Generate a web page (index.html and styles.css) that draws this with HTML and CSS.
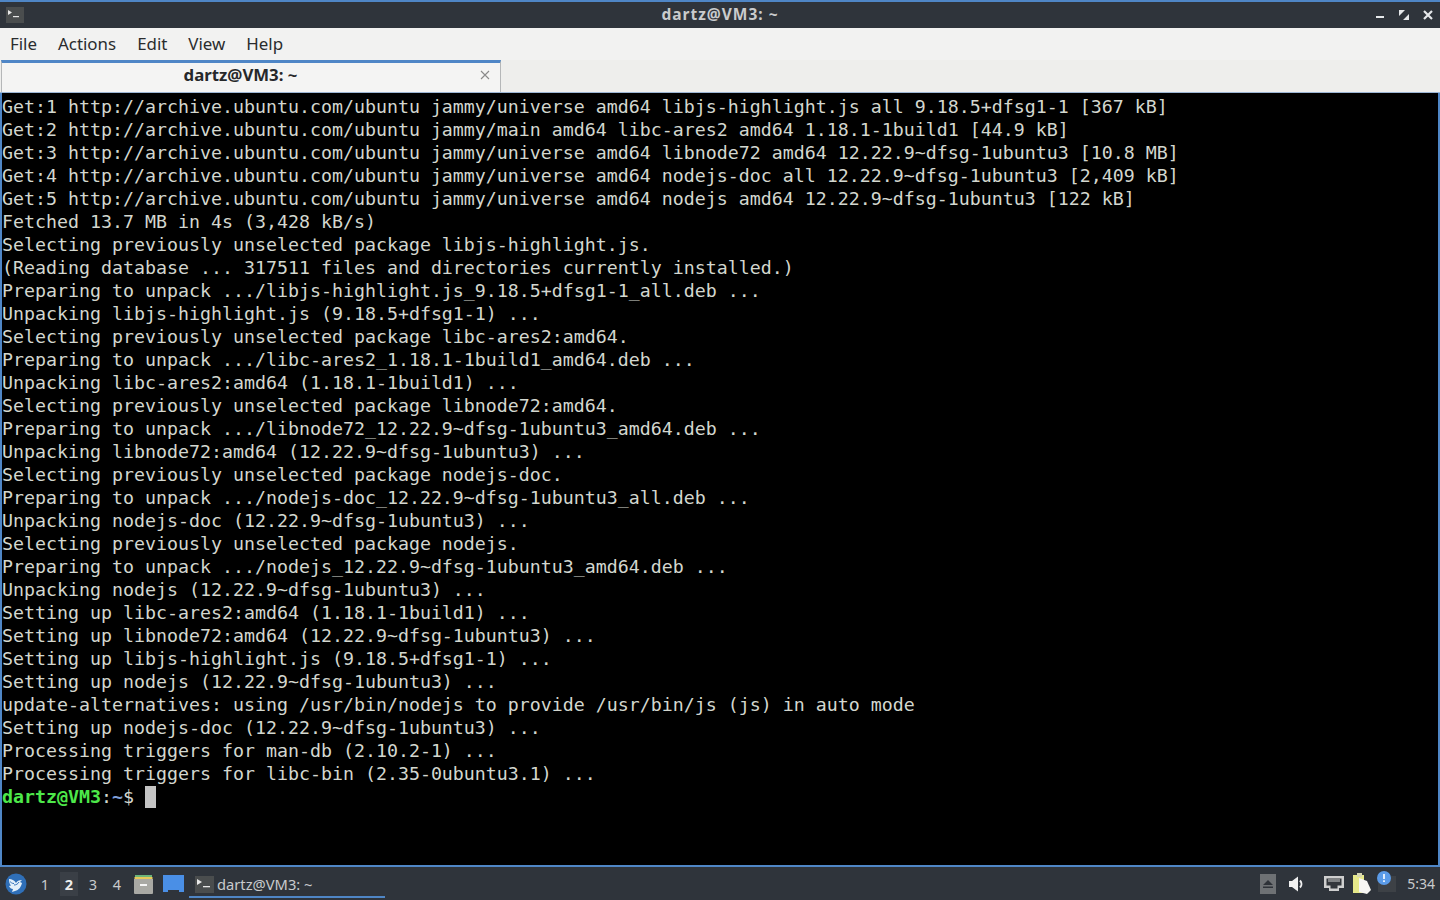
FILE: index.html
```html
<!DOCTYPE html>
<html lang="en">
<head>
<meta charset="utf-8">
<title>dartz@VM3: ~</title>
<link rel="stylesheet" href="styles.css">
</head>
<body>
<div class="window">
  <header class="titlebar">
    <span class="win-icon"><svg width="18" height="16" viewBox="0 0 18 16"><rect width="18" height="16" fill="#4a4d4e"/><path d="M2 3l4 2.500-4 2.500" fill="#e8e8e8"/><path d="M7 9h6v1.200H7z" fill="#e8e8e8"/></svg></span>
    <span class="win-title">dartz@VM3: ~</span>
    <span class="win-controls">
      <svg width="10" height="10" viewBox="0 0 10 10"><path d="M1 6h8v2H1z" fill="#e6e8ea"/></svg>
      <svg width="12" height="12" viewBox="0 0 12 12"><path d="M1 1h6L1 7zM11 11H5l6-6z" fill="#e6e8ea"/></svg>
      <svg width="10" height="10" viewBox="0 0 10 10"><path d="M1 1l8 8M9 1l-8 8" stroke="#e6e8ea" stroke-width="2.200" fill="none"/></svg>
    </span>
  </header>
  <nav class="menubar">
    <span>File</span><span>Actions</span><span>Edit</span><span>View</span><span>Help</span>
  </nav>
  <div class="tabbar">
    <div class="tab">
      <span class="tab-title">dartz@VM3: ~</span>
      <svg class="tab-close" width="10" height="10" viewBox="0 0 10 10"><path d="M1 1l8 8M9 1l-8 8" stroke="#8a8a8a" stroke-width="1.100" fill="none"/></svg>
    </div>
  </div>
  <main class="terminal"><pre class="output">Get:1 http://archive.ubuntu.com/ubuntu jammy/universe amd64 libjs-highlight.js all 9.18.5+dfsg1-1 [367 kB]
Get:2 http://archive.ubuntu.com/ubuntu jammy/main amd64 libc-ares2 amd64 1.18.1-1build1 [44.9 kB]
Get:3 http://archive.ubuntu.com/ubuntu jammy/universe amd64 libnode72 amd64 12.22.9~dfsg-1ubuntu3 [10.8 MB]
Get:4 http://archive.ubuntu.com/ubuntu jammy/universe amd64 nodejs-doc all 12.22.9~dfsg-1ubuntu3 [2,409 kB]
Get:5 http://archive.ubuntu.com/ubuntu jammy/universe amd64 nodejs amd64 12.22.9~dfsg-1ubuntu3 [122 kB]
Fetched 13.7 MB in 4s (3,428 kB/s)
Selecting previously unselected package libjs-highlight.js.
(Reading database ... 317511 files and directories currently installed.)
Preparing to unpack .../libjs-highlight.js_9.18.5+dfsg1-1_all.deb ...
Unpacking libjs-highlight.js (9.18.5+dfsg1-1) ...
Selecting previously unselected package libc-ares2:amd64.
Preparing to unpack .../libc-ares2_1.18.1-1build1_amd64.deb ...
Unpacking libc-ares2:amd64 (1.18.1-1build1) ...
Selecting previously unselected package libnode72:amd64.
Preparing to unpack .../libnode72_12.22.9~dfsg-1ubuntu3_amd64.deb ...
Unpacking libnode72:amd64 (12.22.9~dfsg-1ubuntu3) ...
Selecting previously unselected package nodejs-doc.
Preparing to unpack .../nodejs-doc_12.22.9~dfsg-1ubuntu3_all.deb ...
Unpacking nodejs-doc (12.22.9~dfsg-1ubuntu3) ...
Selecting previously unselected package nodejs.
Preparing to unpack .../nodejs_12.22.9~dfsg-1ubuntu3_amd64.deb ...
Unpacking nodejs (12.22.9~dfsg-1ubuntu3) ...
Setting up libc-ares2:amd64 (1.18.1-1build1) ...
Setting up libnode72:amd64 (12.22.9~dfsg-1ubuntu3) ...
Setting up libjs-highlight.js (9.18.5+dfsg1-1) ...
Setting up nodejs (12.22.9~dfsg-1ubuntu3) ...
update-alternatives: using /usr/bin/nodejs to provide /usr/bin/js (js) in auto mode
Setting up nodejs-doc (12.22.9~dfsg-1ubuntu3) ...
Processing triggers for man-db (2.10.2-1) ...
Processing triggers for libc-bin (2.35-0ubuntu3.1) ...
<span class="p-user">dartz@VM3</span>:<span class="p-path">~</span>$ <span class="cursor"> </span></pre></main>
</div>
<footer class="panel">
  <svg class="logo" width="22" height="22" viewBox="0 0 22 22"><circle cx="11" cy="11" r="10.500" fill="#2f6fb8"/><path d="M4 6c3 0 5 1 7 4 1-2 3-3 6-3l-2 2 2 1c-1 4-3 7-7 8l-3 1 1-3c-2 0-3-1-4-3l2-.5C4.500 11 4 9 4 6z" fill="#e4f0fa"/><path d="M9 12c2 0 4-1 5-3M5 8.500c1 1 2 2 4 2" stroke="#2f6fb8" fill="none"/></svg>
  <div class="pager"><span>1</span><span class="active">2</span><span>3</span><span>4</span></div>
  <svg class="launcher" width="21" height="21" viewBox="0 0 21 21"><path d="M2 2h17v3H2z" fill="#6cb57a"/><path d="M1.500 4h18v3h-18z" fill="#e7c95a"/><path d="M1 6h19v14a1 1 0 0 1-1 1H2a1 1 0 0 1-1-1z" fill="#a9a9a4"/><path d="M7 11h7v2H7z" fill="#f4f4f4"/></svg>
  <svg class="launcher desk" width="21" height="19" viewBox="0 0 21 19"><path d="M0 1h21v17h-5v-2H5v2H0z" fill="#4a8fe6"/></svg>
  <div class="task">
    <svg width="19" height="17" viewBox="0 0 19 17"><rect width="19" height="17" fill="#4a4d4e"/><path d="M2 3l5 3-5 3" fill="#e8e8e8"/><path d="M8 10h7v1.300H8z" fill="#e8e8e8"/></svg>
    <span>dartz@VM3: ~</span>
  </div>
  <div class="tray">
    <svg width="16" height="20" viewBox="0 0 16 20"><rect width="16" height="20" fill="#6e7174"/><path d="M8 6l5 5H3zM3 12.500h10V14H3z" fill="#2e3238"/></svg>
    <svg class="vol" width="17" height="16" viewBox="0 0 17 16"><path d="M1 5h3l6-4.500v15L4 11H1z" fill="#f0f0f0"/><path d="M12 4.500a5 5 0 0 1 0 7" stroke="#f0f0f0" stroke-width="2" fill="none"/></svg>
    <svg class="net" width="20" height="16" viewBox="0 0 20 16"><path d="M0 0h20v12h-5v3H5v-3H0z" fill="#cfcfcf"/><path d="M2.500 2.500h15v7h-4v3h-7v-3h-4z" fill="#33363b"/><path d="M5 3v3M7 3v3M9 3v3M11 3v3M13 3v3M15 3v3" stroke="#cfcfcf"/></svg>
    <svg class="clip" width="20" height="22" viewBox="0 0 20 22"><path d="M1 2h11v18H1z" fill="#e6e88a"/><path d="M5 0h5v4H5z" fill="#d6d6b0"/><path d="M7 5l8 3 4 9-4 4-8-2z" fill="#f6f6f4"/></svg>
    <svg class="note" width="20" height="22" viewBox="0 0 20 22"><path d="M1 5h18v16H1z" fill="#3d4146"/><circle cx="7" cy="7" r="7" fill="#5b9be8"/><path d="M6.200 3h1.600v5H6.200zM6.200 9.300h1.600v1.600H6.200z" fill="#fff"/></svg>
    <span class="clock">5:34</span>
  </div>
</footer>
</body>
</html>
```
FILE: styles.css
```css
* { box-sizing: border-box; }
html, body { margin: 0; height: 900px; overflow: hidden; background: #2f343b; }
body { display: flex; flex-direction: column; font-family: "Noto Sans", "Open Sans", sans-serif; }
.window { flex: 1; display: flex; flex-direction: column; min-height: 0; }

.titlebar { height: 28px; border-top: 2px solid #4f86c6; background: #2f343b; display: grid; grid-template-columns: 1fr auto 1fr; align-items: center; padding: 0 6px; }
.win-icon { display: flex; }
.win-title { color: #c9cbcd; font-size: 15.5px; line-height: 20px; font-weight: 700; letter-spacing: 1px; padding-bottom: 2px; }
.win-controls { display: flex; justify-content: flex-end; align-items: center; gap: 13px; padding-right: 1px; }

.menubar { height: 32px; background: #f2f2f1; display: flex; align-items: center; gap: 21px; padding: 0 10px 2px; color: #2a2c2e; font-size: 16.9px; }

.tabbar { height: 33px; background: #eeeeec; border-bottom: 1px solid #9db6d4; display: flex; padding-left: 1px; }
.tab { width: 500px; height: 32px; position: relative; border-top: 3px solid #4f86c6; border-left: 1px solid #b5b7b8; border-right: 1px solid #b5b7b8; background: #f4f4f3; display: flex; align-items: center; justify-content: center; padding-bottom: 7px; }
.tab-title { font-size: 16.8px; font-weight: 700; color: #26282a; margin-right: 21px; }
.tab-close { position: absolute; right: 10px; top: 7px; }

.terminal { flex: 1; background: #000; border-left: 2px solid #4f86c6; border-right: 2px solid #4f86c6; border-bottom: 2px solid #4f86c6; overflow: hidden; min-height: 0; }
.output { margin: 0; padding-top: 2px; font-family: "DejaVu Sans Mono", monospace; font-size: 18.27px; line-height: 23px; color: #d3d7cf; }
.p-user { color: #4de84a; font-weight: 700; }
.p-path { color: #7f9fd8; font-weight: 700; }
.cursor { display: inline-block; width: 11px; height: 22px; background: #c4c4c4; vertical-align: -1px; }

.panel { height: 33px; flex: none; background: #2f343b; display: flex; align-items: center; padding: 0 5px; color: #c9cbcd; font-size: 13px; }
.logo { flex: none; }
.pager { display: flex; margin-left: 6px; gap: 0; font-size: 14.5px; }
.pager span { width: 24px; height: 24px; display: flex; align-items: center; justify-content: center; }
.pager .active { background: #3a3f46; color: #eee; font-weight: 700; width: 18px; margin: 0 3px; }
.launcher { flex: none; margin-left: 4px; }
.desk { margin-left: 9px; }
.task { align-self: flex-start; width: 196px; height: 31px; margin-left: 5px; display: flex; align-items: center; gap: 3px; padding: 5px 0 0 6px; border-bottom: 2px solid #4f86c6; font-size: 14.7px; color: #c9cbcd; }
.tray { margin-left: auto; display: flex; align-items: center; }
.vol { margin-left: 12px; }
.net { margin-left: 19px; }
.clip { margin-left: 8px; }
.note { margin-left: 5px; margin-top: -4px; }
.clock { margin-left: 10px; font-size: 14px; color: #c9cbcd; }
```
